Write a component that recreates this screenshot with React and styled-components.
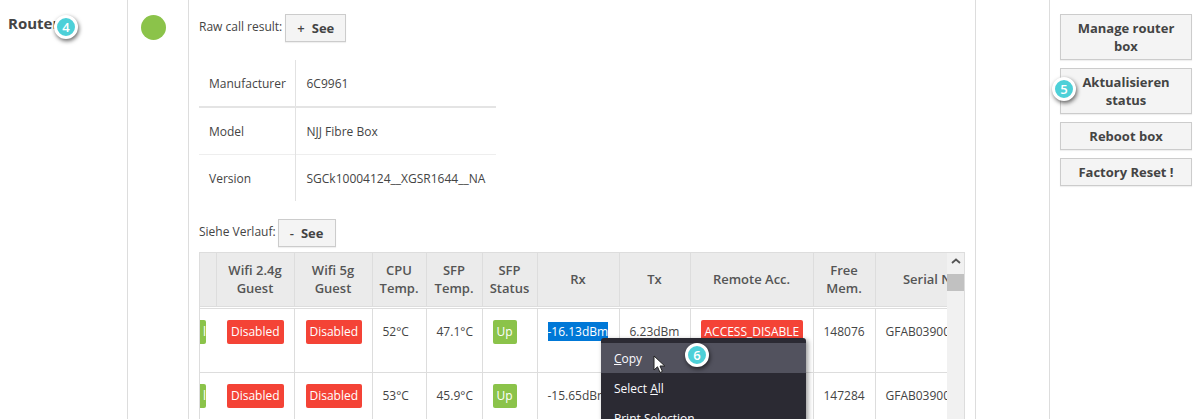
import styled, { createGlobalStyle } from "styled-components"

const GlobalStyle = createGlobalStyle`
html, body {
    margin: 0;
    padding: 0;
    background: #fff;
    overflow: hidden;
}
body {
    height: 419px;
    font-family: "Open Sans", "Liberation Sans", sans-serif;
    font-size: 12px;
    color: #444;
}
`

const info = [
    ["Manufacturer", "6C9961"],
    ["Model", "NJJ Fibre Box"],
    ["Version", "SGCk10004124__XGSR1644__NA"],
]

const columns = [16, 78, 78, 54, 56, 55, 82, 71, 123, 62, 116]
const headers = ["", "Wifi 2.4g Guest", "Wifi 5g Guest", "CPU Temp.", "SFP Temp.", "SFP Status", "Rx", "Tx", "Remote Acc.", "Free Mem.", "Serial No."]

const rows = [
    { cpu: "52°C", sfp: "47.1°C", rx: "-16.13dBm", tx: "6.23dBm", mem: "148076", selected: true },
    { cpu: "53°C", sfp: "45.9°C", rx: "-15.65dBm", tx: "6.23dBm", mem: "147284" },
]

function App() {
    return (
        <>
            <GlobalStyle />
            <Page>
                <TitleColumn>
                    <Title>Router<Step $left={46} $top={2}>4</Step></Title>
                </TitleColumn>
                <StatusColumn><Dot /></StatusColumn>
                <MainColumn>
                    <SeeRow>
                        <span>Raw call result:</span>
                        <SeeButton $width={61}><Sign>+</Sign>See</SeeButton>
                    </SeeRow>
                    <InfoTable>
                        <tbody>
                            {info.map(([label, value], i) => (
                                <InfoRow key={label} $first={i === 0} $last={i === 2}>
                                    <InfoLabel>{label}</InfoLabel>
                                    <InfoValue>{value}</InfoValue>
                                </InfoRow>
                            ))}
                        </tbody>
                    </InfoTable>
                    <HistoryRow>
                        <span>Siehe Verlauf:</span>
                        <SeeButton $width={58}><Sign>-</Sign>See</SeeButton>
                    </HistoryRow>
                    <TableFrame>
                        <TableClip>
                            <DataTable>
                                <colgroup>
                                    {columns.map((w, i) => <col key={i} style={{ width: w }} />)}
                                </colgroup>
                                <thead>
                                    <tr>
                                        {headers.map((h, i) => <HeadCell key={i}>{h}</HeadCell>)}
                                    </tr>
                                </thead>
                                <tbody>
                                    {rows.map((r) => (
                                        <tr key={r.cpu}>
                                            <EdgeCell><ClippedBadge>l</ClippedBadge></EdgeCell>
                                            <Cell><Badge $color="#f44336" $inset>Disabled</Badge></Cell>
                                            <Cell><Badge $color="#f44336" $inset>Disabled</Badge></Cell>
                                            <Cell>{r.cpu}</Cell>
                                            <Cell>{r.sfp}</Cell>
                                            <Cell><Badge $color="#8bc34a">Up</Badge></Cell>
                                            <Cell>{r.selected ? <Selected>{r.rx}</Selected> : r.rx}</Cell>
                                            <Cell>{r.tx}</Cell>
                                            <Cell><Badge $color="#f44336">ACCESS_DISABLE</Badge></Cell>
                                            <Cell>{r.mem}</Cell>
                                            <Cell>GFAB03900C1A</Cell>
                                        </tr>
                                    ))}
                                </tbody>
                            </DataTable>
                        </TableClip>
                        <Scrollbar>
                            <ScrollArrow viewBox="0 0 10 6">
                                <path d="M1 5 L5 1.5 L9 5" fill="none" stroke="#555" strokeWidth="1.8" />
                            </ScrollArrow>
                            <ScrollThumb />
                        </Scrollbar>
                        <ContextMenu>
                            <MenuItem $hover><u>C</u>opy</MenuItem>
                            <MenuItem>Select <u>A</u>ll</MenuItem>
                            <MenuItem>Print Selection</MenuItem>
                            <Step $left={84} $top={5}>6</Step>
                            <Pointer viewBox="0 0 13 19">
                                <path d="M1 1 L1 15 L4.5 11.8 L7 17.5 L9.4 16.4 L7 11 L11.8 11 Z" fill="#fff" stroke="#222" strokeWidth="1" />
                            </Pointer>
                        </ContextMenu>
                    </TableFrame>
                </MainColumn>
                <SpacerColumn />
                <ActionColumn>
                    <ActionButton>Manage router box</ActionButton>
                    <ActionButton>
                        Aktualisieren status
                        <Step $left={-9} $top={8}>5</Step>
                    </ActionButton>
                    <ActionButton>Reboot box</ActionButton>
                    <ActionButton>Factory Reset !</ActionButton>
                </ActionColumn>
            </Page>
        </>
    )
}

const Page = styled.div`
display: flex;
height: 419px;
width: 1201px;
overflow: hidden;
`
const TitleColumn = styled.div`
flex: none;
width: 128px;
box-sizing: border-box;
padding: 13px 0 0 8px;
border-right: 1px solid #ddd;
`
const Title = styled.div`
position: relative;
display: inline-block;
font-size: 15px;
line-height: 20px;
font-weight: 700;
color: #444;
`
const Step = styled.span`
position: absolute;
left: ${(p) => p.$left}px;
top: ${(p) => p.$top}px;
z-index: 3;
width: 18px;
height: 18px;
border: 3px solid #fff;
border-radius: 50%;
background: #4dd0d8;
color: #fff;
font-size: 13px;
font-weight: 600;
line-height: 18px;
text-align: center;
box-shadow: 1px 2px 4px rgba(0, 0, 0, 0.6);
`
const StatusColumn = styled.div`
flex: none;
width: 61px;
box-sizing: border-box;
padding: 15px 0 0 13px;
border-right: 1px solid #ddd;
`
const Dot = styled.div`
width: 25px;
height: 25px;
border-radius: 50%;
background: #8bc34a;
`
const MainColumn = styled.div`
flex: none;
width: 787px;
box-sizing: border-box;
padding: 14px 10px 0 10px;
border-right: 1px solid #ddd;
`
const SeeRow = styled.div`
display: flex;
align-items: flex-start;
gap: 3px;
line-height: 26px;
color: #444;
`
const HistoryRow = styled(SeeRow)`
margin-top: 18px;
gap: 2px;
`
const SeeButton = styled.button`
width: ${(p) => p.$width}px;
height: 28px;
box-sizing: border-box;
padding: 0;
background: #f4f4f4;
border: 1px solid #ccc;
font-family: inherit;
font-size: 13px;
font-weight: 700;
color: #444;
box-shadow: 0 1px 1px rgba(0, 0, 0, 0.06);
`
const Sign = styled.span`
margin-right: 7px;
font-weight: 600;
`
const InfoTable = styled.table`
margin-top: 18px;
width: 297px;
border-collapse: collapse;
table-layout: fixed;
`
const InfoRow = styled.tr`
height: 47px;
border-bottom: ${(p) => (p.$last ? "none" : p.$first ? "2px solid #e4e4e4" : "1px solid #eee")};

td {
    padding-top: ${(p) => (p.$first ? 0 : 2)}px;
}
`
const InfoLabel = styled.td`
width: 96px;
box-sizing: border-box;
padding-left: 10px;
padding-bottom: 0;
border-right: 1px solid #e2e2e2;
color: #444;
`
const InfoValue = styled.td`
padding-left: 11px;
padding-bottom: 0;
color: #444;
white-space: nowrap;
`
const TableFrame = styled.div`
position: relative;
display: flex;
margin-top: 5px;
width: 766px;
height: 170px;
box-sizing: border-box;
border: 1px solid #ddd;
border-bottom: none;
`
const TableClip = styled.div`
flex: none;
width: 747px;
overflow: hidden;
`
const DataTable = styled.table`
table-layout: fixed;
width: 791px;
border-collapse: collapse;
`
const HeadCell = styled.th`
height: 54px;
box-sizing: border-box;
padding: 0 2px;
background: #ebebeb;
border-right: 1px solid #ddd;
border-bottom: 3px double #ddd;
font-size: 13px;
line-height: 18px;
font-weight: 600;
color: #555;
text-align: center;
white-space: normal;
`
const Cell = styled.td`
height: 65px;
box-sizing: border-box;
padding: 14px 0 0 10px;
vertical-align: top;
text-align: left;
border-right: 1px solid #ddd;
border-bottom: 1px solid #ddd;
color: #444;
line-height: 18px;
white-space: nowrap;
overflow: hidden;
`
const EdgeCell = styled(Cell)`
padding-left: 0;
border-right: none;
`
const Badge = styled.span`
display: inline-block;
margin-top: -3px;
margin-left: ${(p) => (p.$inset ? 1 : 0)}px;
padding: 0 4px;
height: 24px;
line-height: 24px;
border-radius: 2px;
background: ${(p) => p.$color};
color: #fff;
font-size: 12px;
`
const ClippedBadge = styled.span`
display: block;
margin-top: -3px;
width: 6px;
height: 24px;
line-height: 24px;
border-radius: 0 2px 2px 0;
background: #8bc34a;
color: #fff;
text-align: right;
`
const Selected = styled.span`
background: #0078d7;
color: #fff;
padding: 1px 0;
`
const Scrollbar = styled.div`
flex: none;
width: 17px;
background: #f1f1f1;
`
const ScrollArrow = styled.svg`
display: block;
width: 10px;
height: 6px;
margin: 5px auto 10px;
`
const ScrollThumb = styled.div`
height: 17px;
background: #c1c1c1;
`
const ContextMenu = styled.div`
position: absolute;
left: 401px;
top: 85px;
z-index: 2;
width: 205px;
height: 120px;
box-sizing: border-box;
padding-top: 5px;
background: #2b2a33;
border-radius: 3px 3px 0 0;
box-shadow: 2px 2px 5px rgba(0, 0, 0, 0.4);
`
const MenuItem = styled.div`
height: 30px;
box-sizing: border-box;
padding: 1px 0 0 13px;
line-height: 30px;
color: #fbfbfe;
font-size: 12px;
background: ${(p) => (p.$hover ? "#52525e" : "transparent")};
`
const Pointer = styled.svg`
position: absolute;
left: 52px;
top: 17px;
width: 13px;
height: 19px;
`
const SpacerColumn = styled.div`
flex: none;
width: 73px;
border-right: 1px solid #ddd;
`
const ActionColumn = styled.div`
flex: none;
width: 142px;
box-sizing: border-box;
padding: 14px 0 0 10px;
display: flex;
flex-direction: column;
align-items: flex-start;
gap: 8px;
`
const ActionButton = styled.button`
position: relative;
width: 132px;
box-sizing: border-box;
padding: 4px 8px;
background: #f4f4f4;
border: 1px solid #ccc;
font-family: inherit;
font-size: 13px;
line-height: 18px;
font-weight: 700;
color: #444;
text-align: center;
box-shadow: 0 1px 1px rgba(0, 0, 0, 0.06);
`

export default App
